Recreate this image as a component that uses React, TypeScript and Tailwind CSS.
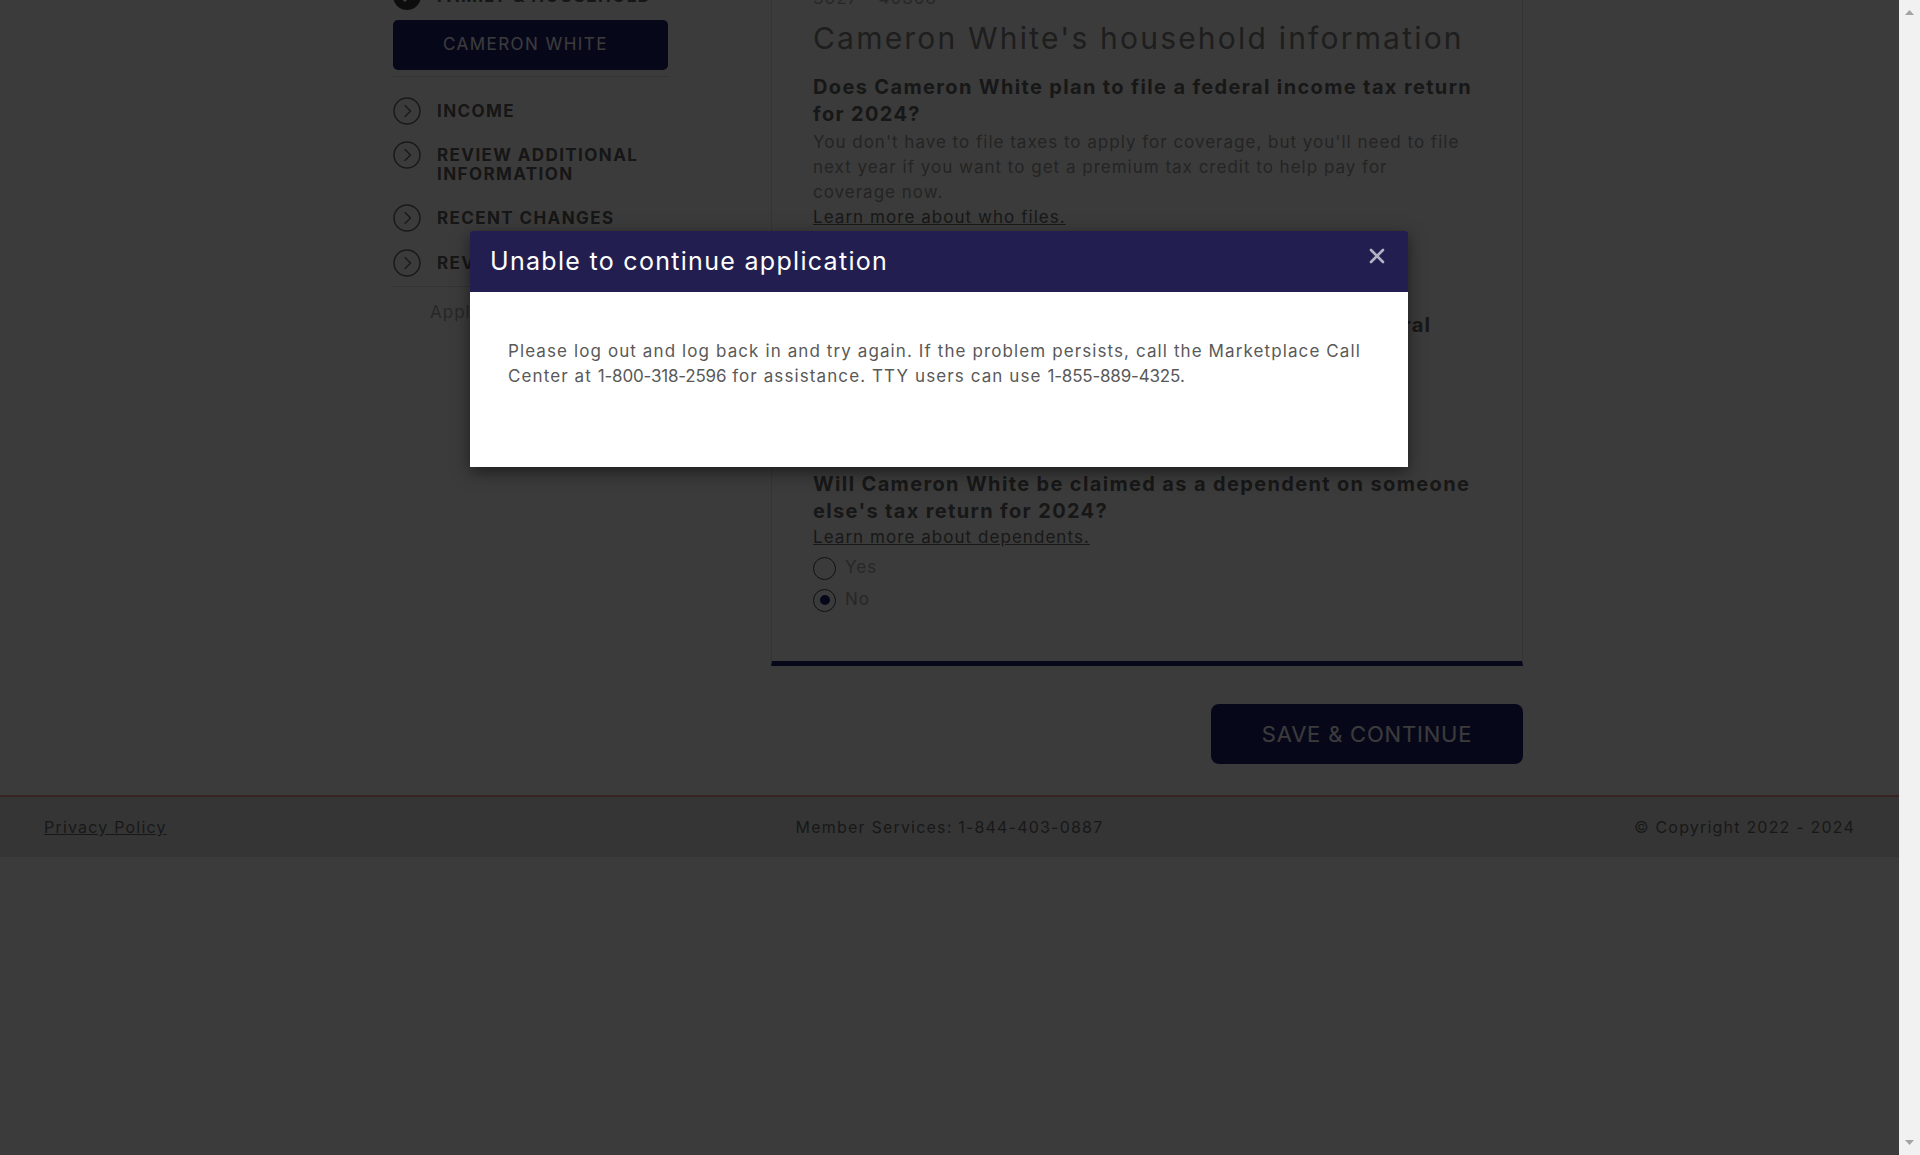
import React from 'react';

function StepIcon() {
  return (
    <svg width="28" height="28" viewBox="0 0 28 28" fill="none" className="shrink-0">
      <circle cx="14" cy="14" r="13" stroke="#6e6e6e" strokeWidth="1.5" />
      <path d="M12 8.5l5.5 5.5-5.5 5.5" stroke="#6e6e6e" strokeWidth="1.5" strokeLinecap="round" strokeLinejoin="round" />
    </svg>
  );
}

function DoneIcon() {
  return (
    <svg width="28" height="28" viewBox="0 0 28 28" fill="none" className="shrink-0">
      <circle cx="14" cy="14" r="14" fill="#3a3a3a" />
      <path d="M8 14.5l4 4 8-9" stroke="#fff" strokeWidth="2.5" strokeLinecap="round" strokeLinejoin="round" />
    </svg>
  );
}

function Step({ label, done, className = '' }: { label: React.ReactNode; done?: boolean; className?: string }) {
  return (
    <div className={`flex items-start gap-4 ${className}`}>
      {done ? <DoneIcon /> : <StepIcon />}
      <div className="pt-[5px] pb-[4px] text-[17px] leading-[19px] tracking-[1.4px] font-bold uppercase text-[#5e5e5e]">{label}</div>
    </div>
  );
}

function Radio({ label, checked }: { label: string; checked?: boolean }) {
  return (
    <label className="flex items-center h-[32px] gap-[9px]">
      <span className="w-[23px] h-[23px] rounded-full border-[1.5px] border-[#444] flex items-center justify-center">
        {checked && <span className="w-[10px] h-[10px] rounded-full bg-[#222270]" />}
      </span>
      <span className="text-[17px] tracking-[1px] text-[#a8a8a8]">{label}</span>
    </label>
  );
}

function Question({ title, children, className, titleClass = 'tracking-[1.35px]' }: { title: React.ReactNode; children?: React.ReactNode; className?: string; titleClass?: string }) {
  return (
    <div className={className}>
      <h3 className={`text-[20px] leading-[27px] font-bold text-[#666] ${titleClass}`}>{title}</h3>
      {children}
      <div className="mt-[2px]">
        <Radio label="Yes" />
        <Radio label="No" checked />
      </div>
    </div>
  );
}

function LearnMore({ children }: { children: React.ReactNode }) {
  return <a className="block w-fit text-[17px] leading-[25px] tracking-[1.05px] text-[#6a6a6a] underline">{children}</a>;
}

export default function App() {
  return (
    <div className="flex h-[1155px] overflow-hidden bg-white font-['Inter',sans-serif]">
      <div className="relative flex-1 min-w-0">
        <div className="flex flex-col" aria-hidden="true">
          <div className="flex items-start pl-[393px] -mt-[60px]">
            <aside className="w-[275px] pt-[42px] shrink-0">
              <Step label="Family & Household" done />
              <div className="mt-[10px] h-[50px] rounded-[5px] bg-[#222270] flex items-center pl-[50px] text-[17px] tracking-[1.45px] text-white uppercase">
                Cameron White
              </div>
              <div className="mt-[6px] h-px bg-[#dcdcdc]" />
              <div className="mt-[20px] flex flex-col gap-4">
                <Step label="Income" />
                <Step label={<>Review additional<br />information</>} />
                <Step label="Recent changes" />
                <Step label="Review & sign" className="mt-[1px]" />
              </div>
              <div className="mt-[9px] h-px bg-[#dcdcdc]" />
              <p className="mt-[13px] pl-[37px] text-[17px] leading-[24px] tracking-[1px] text-[#a8a8a8]">Application help</p>
            </aside>

            <div className="ml-[103px] w-[752px] shrink-0 flex flex-col">
              <section className="bg-white border-x border-[#e2e2e2] border-b-[5px] border-b-[#222270] pt-[46px] pl-[41px] pr-[44px] pb-[45px]">
                <p className="text-[17px] leading-[24px] tracking-[1px] text-[#a8a8a8]">3027 - 40808</p>
                <h1 className="mt-[8px] text-[30px] leading-[40px] tracking-[2.2px] font-normal text-[#808080]">
                  Cameron White's household information
                </h1>

                <Question className="mt-[16px]" title="Does Cameron White plan to file a federal income tax return for 2024?">
                  <p className="mt-[2px] text-[17px] leading-[25px] tracking-[1px] text-[#9a9a9a]">
                    You don't have to file taxes to apply for coverage, but you'll need to file<br />
                    next year if you want to get a premium tax credit to help pay for<br />
                    coverage now.
                  </p>
                  <LearnMore>Learn more about who files.</LearnMore>
                </Question>

                <Question
                  className="mt-[16px]"
                  titleClass="tracking-[1.15px]"
                  title={<>Will Cameron White and a spouse file a combined federal<br />income tax return for 2024?</>}
                >
                  <LearnMore>Learn more about filing jointly.</LearnMore>
                </Question>

                <Question className="mt-[14px]" title="Will Cameron White be claimed as a dependent on someone else's tax return for 2024?">
                  <LearnMore>Learn more about dependents.</LearnMore>
                </Question>
              </section>

              <div className="mt-[38px] flex justify-end">
                <button className="w-[312px] h-[60px] rounded-[8px] bg-[#222270] text-[22px] tracking-[0.8px] text-white uppercase">
                  Save &amp; Continue
                </button>
              </div>
            </div>
          </div>

          <footer className="mt-[31px] h-[62px] border-t-2 border-[#f0a090] bg-[#e6e6e6] px-[44px] grid grid-cols-3 items-center text-[16px] tracking-[1.2px] text-[#6a6a6a]">
            <a className="underline justify-self-start">Privacy Policy</a>
            <span className="text-center">Member Services: 1-844-403-0887</span>
            <span className="text-right">© Copyright 2022 - 2024</span>
          </footer>
        </div>

        <div className="absolute inset-0 bg-black/[0.77]" />

        <div className="absolute inset-0" role="dialog" aria-modal="true">
          <div className="ml-[470px] mt-[231px] w-[938px] shadow-[0_5px_15px_rgba(0,0,0,0.5)]">
            <div className="h-[61px] bg-[#221f50] rounded-t-[3px] flex items-start justify-between pl-[20px] pr-[23px]">
              <h2 className="mt-[15px] text-[25px] leading-[30px] tracking-[1.3px] text-white">Unable to continue application</h2>
              <button className="mt-[17px]" aria-label="Close">
                <svg width="16" height="16" viewBox="0 0 16 16">
                  <path d="M2 2l12 12M14 2L2 14" stroke="#b3b3c6" strokeWidth="2.6" strokeLinecap="round" />
                </svg>
              </button>
            </div>
            <div className="bg-white h-[175px] px-[38px] pt-[47px]">
              <p className="text-[17px] leading-[25px] tracking-[1.1px] text-[#595959]">
                Please log out and log back in and try again. If the problem persists, call the Marketplace Call Center at{' '}
                <span className="tracking-[-0.2px]">1-800-318-2596</span> for assistance. TTY users can use{' '}
                <span className="tracking-[-0.2px]">1-855-889-4325</span>.
              </p>
            </div>
          </div>
        </div>
      </div>

      <div className="w-[21px] shrink-0 bg-[#f1f1f1] flex flex-col items-center justify-between py-[10px]">
        <svg width="9" height="5" viewBox="0 0 9 5"><path d="M0 5L4.5 0 9 5z" fill="#a3a3a3" /></svg>
        <svg width="9" height="5" viewBox="0 0 9 5"><path d="M0 0h9L4.5 5z" fill="#a3a3a3" /></svg>
      </div>
    </div>
  );
}
